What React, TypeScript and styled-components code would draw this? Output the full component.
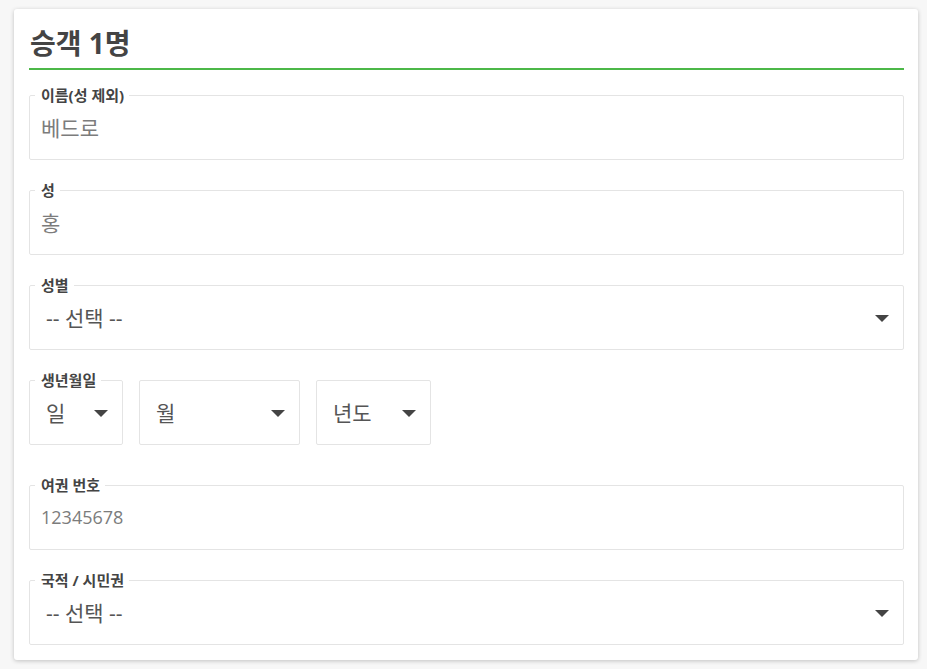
import styled, { createGlobalStyle } from "styled-components";

const Global = createGlobalStyle`
    html, body {
        margin: 0;
        padding: 0;
        background: #f7f7f7;
        font-family: "Open Sans", "Noto Sans CJK KR", sans-serif;
    }
`

const Page = styled.div`
    padding: 9px 9px 9px 14px;
`

const Card = styled.div`
    width: 875px;
    background: #fff;
    padding: 18px 14px 15px 15px;
    border-radius: 3px;
    box-shadow: 0 1px 4px rgba(0, 0, 0, 0.22);

    & > fieldset:last-child {
        margin-bottom: 0;
    }
`

const Heading = styled.h2`
    margin: 0 0 17px 0;
    padding: 0 0 8px 1px;
    font-family: "Open Sans", "Noto Sans CJK KR", sans-serif;
    font-size: 28px;
    font-weight: 700;
    line-height: 33px;
    color: #444;
    border-bottom: 2px solid #4cb848;
`

const Field = styled.fieldset<{ $width?: number }>`
    margin: 0 0 22px 0;
    padding: 0 0 8px 0;
    border: 1px solid #e4e4e4;
    border-radius: 2px;
    min-width: 0;
    width: ${p => (p.$width ? `${p.$width}px` : "auto")};
    box-sizing: border-box;
`

const Legend = styled.legend`
    margin-left: 5px;
    padding: 0 5px 0 6px;
    font-size: 15px;
    font-weight: 700;
    line-height: 16px;
    color: #444;
`

const Value = styled.div<{ $size?: number }>`
    height: 48px;
    display: flex;
    align-items: center;
    padding-left: 11px;
    font-size: ${p => p.$size ?? 21}px;
    color: #7c7c7c;
`

const SelectRow = styled.div`
    height: 48px;
    display: flex;
    align-items: center;
    justify-content: space-between;
    padding: 0 14px 0 16px;
    font-size: 21px;
    color: #555;
`

const Arrow = styled.span`
    width: 0;
    height: 0;
    border-left: 7px solid transparent;
    border-right: 7px solid transparent;
    border-top: 7px solid #444;
    margin-top: 2px;
`

const DateRow = styled.div`
    display: flex;
    align-items: flex-end;
    gap: 16px;
    margin-bottom: 32px;

    & > fieldset {
        margin-bottom: 0;
    }
`

const Box = styled.div<{ $width: number }>`
    width: ${p => p.$width}px;
    height: 65px;
    box-sizing: border-box;
    border: 1px solid #e4e4e4;
    border-radius: 2px;
    display: flex;
    align-items: center;
    justify-content: space-between;
    padding: 0 14px 1px 16px;
    font-size: 21px;
    color: #555;
`

const TextField = ({ label, value, size }: { label: string; value: string; size?: number }) => (
    <Field>
        <Legend>{label}</Legend>
        <Value $size={size}>{value}</Value>
    </Field>
)

const SelectField = ({ label, value }: { label: string; value: string }) => (
    <Field>
        <Legend>{label}</Legend>
        <SelectRow><span>-- {value} --</span><Arrow /></SelectRow>
    </Field>
)

export default function App() {
    return (
        <Page>
            <Global />
            <Card>
                <Heading>승객 1명</Heading>
                <TextField label="이름(성 제외)" value="베드로" />
                <TextField label="성" value="홍" />
                <SelectField label="성별" value="선택" />
                <DateRow>
                    <Field $width={94}>
                        <Legend>생년월일</Legend>
                        <SelectRow><span>일</span><Arrow /></SelectRow>
                    </Field>
                    <Box $width={161}><span>월</span><Arrow /></Box>
                    <Box $width={115}><span>년도</span><Arrow /></Box>
                </DateRow>
                <TextField label="여권 번호" value="12345678" size={18} />
                <SelectField label="국적 / 시민권" value="선택" />
            </Card>
        </Page>
    );
}
